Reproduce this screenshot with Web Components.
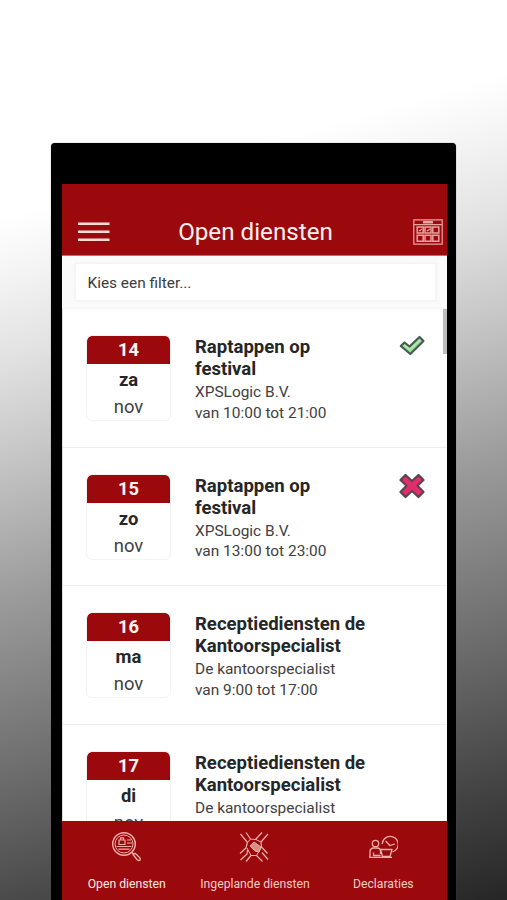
<!DOCTYPE html>
<html lang="nl">
<head>
<meta charset="utf-8">
<title>Open diensten</title>
<style>
html,body{margin:0;height:100%;overflow:hidden}
body{font-family:Roboto,"Liberation Sans",sans-serif;color:#252627}
</style>
</head>
<body>
<phone-stage>
  <app-header slot="header">Open diensten</app-header>
  <filter-bar slot="filter">Kies een filter...</filter-bar>
  <shift-row>
    <date-card slot="date"><span slot="num">14</span><span slot="day">za</span><span slot="month">nov</span></date-card>
    <span slot="title">Raptappen op<br>festival</span><span slot="org">XPSLogic B.V.</span><span slot="time">van 10:00 tot 21:00</span>
    <status-icon slot="status" kind="yes"></status-icon>
  </shift-row>
  <shift-row>
    <date-card slot="date"><span slot="num">15</span><span slot="day">zo</span><span slot="month">nov</span></date-card>
    <span slot="title">Raptappen op<br>festival</span><span slot="org">XPSLogic B.V.</span><span slot="time">van 13:00 tot 23:00</span>
    <status-icon slot="status" kind="no"></status-icon>
  </shift-row>
  <shift-row>
    <date-card slot="date"><span slot="num">16</span><span slot="day">ma</span><span slot="month">nov</span></date-card>
    <span slot="title">Receptiediensten de<br>Kantoorspecialist</span><span slot="org">De kantoorspecialist</span><span slot="time">van 9:00 tot 17:00</span>
  </shift-row>
  <shift-row>
    <date-card slot="date"><span slot="num">17</span><span slot="day">di</span><span slot="month">nov</span></date-card>
    <span slot="title">Receptiediensten de<br>Kantoorspecialist</span><span slot="org">De kantoorspecialist</span>
  </shift-row>
  <tab-bar slot="tabs">
    <tab-item icon="search" active>Open diensten</tab-item>
    <tab-item icon="hands">Ingeplande diensten</tab-item>
    <tab-item icon="desk">Declaraties</tab-item>
  </tab-bar>
</phone-stage>
<script>
const define = (name, html) => customElements.define(name, class extends HTMLElement {
  constructor() {
    super();
    this.attachShadow({mode: 'open'}).innerHTML = typeof html === 'function' ? html(this) : html;
  }
});

define('phone-stage', `<style>
:host{display:block;box-sizing:border-box;width:507px;height:900px;padding:143px 51px 0;overflow:hidden;
background:linear-gradient(164deg,#fff 0,#fff 210px,#f4f4f4 265px,#e2e2e2 345px,#c8c8c8 435px,#999 585px,#686868 765px,#444 890px,#262626 1005px)}
.body{box-sizing:border-box;height:757px;background:#000;border-radius:4px 4px 0 0;padding:41px 9px 0 11px;box-shadow:0 0 1px #555}
.screen{height:716px;background:#fff;display:flex;flex-direction:column}
.list{flex:1;min-height:0;overflow:hidden;position:relative;border-left:1px solid #ddd}
.bar{position:absolute;right:0;top:0;width:4px;height:45px;background:#bcbcbc}
</style><div class="body"><div class="screen"><slot name="header"></slot><slot name="filter"></slot><div class="list"><slot></slot><div class="bar"></div></div><slot name="tabs"></slot></div></div>`);

define('app-header', `<style>
:host{display:grid;grid-template-columns:32px 1fr 30px;align-items:center;box-sizing:border-box;flex:none;height:72px;padding:24px 4px 0 16px;background:#9b090d;color:#fff0ee;border-bottom:1px solid #c8686a}
.t{text-align:center;font-size:24.200px;line-height:30px;padding:0 12px 0 0;white-space:nowrap}
svg{display:block}
</style><svg width="32" height="22" stroke="#ffdcdc" stroke-width="2.600"><path d="M0 2.800H31.500M0 10.800H31.500M0 18.800H31.500"/></svg><div class="t"><slot></slot></div>
<svg width="30" height="26" fill="none" stroke="#e9a49f" stroke-width="1.200"><path d="M.8.8H29.200V25.200H.8ZM.8 5.600H29.200"/><path d="M10 3.200H20" stroke-width="2.600"/><path d="M4.200 8h6v6h-6zM12 8h6v6h-6zM19.800 8h6v6h-6zM4.200 16.300h6v6h-6zM12 16.300h6v6h-6zM19.800 16.300h6v6h-6z" stroke-width="1.500"/><path d="M6 10.800l1 1 2-2M13.800 10.800l1 1 2-2"/></svg>`);

define('filter-bar', `<style>
:host{display:block;box-sizing:border-box;flex:none;height:53px;padding:6px 10px 6px 12px;background:#fafafa;border-bottom:1px solid #f4f4f4}
.box{box-sizing:border-box;height:40px;border:2px solid #f5f5f5;background:#fff;font-size:15.400px;line-height:38px;padding-left:11.500px;color:#3b3b3b}
</style><div class="box"><slot></slot></div>`);

define('shift-row', `<style>
:host{display:flex;box-sizing:border-box;height:138.600px;padding:26px 20px 0 23px;border-bottom:1px solid #eee}
.info{flex:1;padding:1px 0 0 24px;white-space:nowrap}
.title{font-weight:700;font-size:18.550px;line-height:22px}
.sub{font-size:15.450px;line-height:20.700px;color:#3f4041}
.sub.o{padding-top:2px}
</style><slot name="date"></slot><div class="info"><div class="title"><slot name="title"></slot></div><div class="sub o"><slot name="org"></slot></div><div class="sub"><slot name="time"></slot></div></div><slot name="status"></slot>`);

define('date-card', `<style>
:host{display:block;box-sizing:border-box;flex:none;width:85px;height:86px;border:1.500px solid #f3f3f3;border-radius:6px;overflow:hidden;text-align:center;font-size:18.400px;line-height:27px;background:#fff}
.n{height:28px;background:#9b090d;color:#fff3f1;font-weight:700;border-radius:5px 5px 0 0}
.d{font-weight:700;padding-top:2px}.m{color:#3f4041}
</style><div class="n"><slot name="num"></slot></div><div class="d"><slot name="day"></slot></div><div class="m"><slot name="month"></slot></div>`);

define('status-icon', el => `<style>:host{display:block;flex:none;width:28px;height:28px}svg{display:block}</style>` +
(el.getAttribute('kind') === 'yes'
? `<svg width="28" height="28" fill="none" stroke-linejoin="round"><path d="M1.800 11L5.500 7.500L10.500 11.500L20.500 2L24.500 6L11.300 19Z" fill="#94df96" stroke="#4d5754" stroke-width="2.200"/><path d="M5 10l6 4.500L21 5" stroke="#b4edaf" stroke-width="1.200"/></svg>`
: `<svg width="28" height="28" stroke-linejoin="round"><path d="M6.500 1.500L13 7.500L19.500 1.500L24.500 6.500L18.500 12.300L24.500 18.500L19.500 23.500L13 17.500L6.500 23.500L1.500 18.500L7.500 12.300L1.500 6.500Z" transform="translate(0 -.5)" fill="#e12d69" stroke="#5b4450" stroke-width="2.200"/></svg>`));

define('tab-bar', `<style>
:host{display:grid;grid-template-columns:repeat(3,1fr);flex:none;height:79px;background:#9b090d;color:#f6c9c5}
</style><slot></slot>`);

const icons = {
search: `<circle cx="13" cy="12" r="11.300" stroke-width="1.400"/><circle cx="13" cy="12" r="9" stroke-width="1"/><path d="M8 8h6v4.500H8zM9.500 8V5.800h3V8M16 8h4M16 11h5M5.500 14.500h15M7.500 17.200h11" stroke-width="1.200"/><path d="M20.500 20l2 2"/><path d="M22 22.500q1.500-2 3.500 0l3.500 3.500q1 2.500-1.500 2.500-1 0-5.500-6Z"/>`,
hands: `<path d="M1.500 2l7 8.500M7 .5l4.500 6.500 5 .5 6.500-7M29 2l-7 8 .5 5 6 6.500M1 21.500l6-5.500 1.500-6M7 29.500l5-6h5.500l6 6M29 27.500l-6-7M1.500 28l6.500-6 .5-4" stroke-width="1.200"/><path d="M8.500 10.500l3-3.500M17 7.500l5 2.500M8 16l4 7.500M17.500 23.500l5-8.500" stroke-width="1"/><path d="M11 14l4-4 7 5-2 5-4-1z" fill="#d98b86" stroke-width="1"/>`,
desk: `<path d="M14.200 12A8 8 0 1 1 24.500 20"/><path d="M17.500 9l4.500 4.500 5-1.500"/><circle cx="7.500" cy="11.500" r="3.200"/><path d="M2 25v-5q0-4 4-4h3q3.500 0 3.500 3v3M5.500 20.500v3h7M12.500 17.500h11.500l-2 7H14.500ZM1 25.300H24"/>`
};
define('tab-item', el => `<style>
:host{display:flex;flex-direction:column;align-items:center;padding-top:11px;font-size:12.200px;line-height:16px;white-space:nowrap}
:host([active]){color:#ffe9e6}
svg{display:block;margin-bottom:13px}
.l{padding-left:1px}
</style><svg width="30" height="31" viewBox="0 0 30 31" fill="none" stroke="#edb0a9" stroke-width="1.300" stroke-linejoin="round">${icons[el.getAttribute('icon')]}</svg><div class="l"><slot></slot></div>`);
</script>
</body>
</html>
